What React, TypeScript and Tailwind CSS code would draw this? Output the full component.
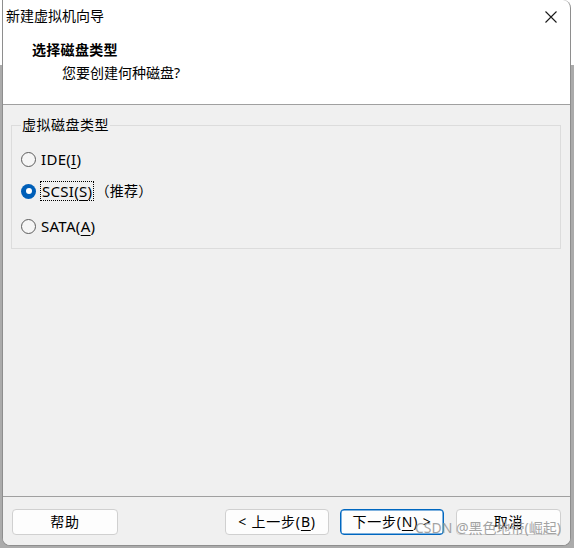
import type { ReactNode } from 'react';

const font = "font-['Noto_Sans','Noto_Sans_CJK_SC',sans-serif]";

function Key({ children }: { children: ReactNode }) {
  return <span className="underline underline-offset-[3px] decoration-1">{children}</span>;
}

function Radio({ checked, children }: { checked?: boolean; children: ReactNode }) {
  return (
    <div className="flex h-[20px] items-center">
      {checked ? (
        <span className="flex h-[15px] w-[15px] items-center justify-center rounded-full bg-[#005fb8]">
          <span className="h-[6px] w-[6px] rounded-full bg-white" />
        </span>
      ) : (
        <span className="h-[15px] w-[15px] rounded-full border border-[#5d5d5d] bg-[#f6f6f6]" />
      )}
      <div className="ml-[4px] flex items-center">{children}</div>
    </div>
  );
}

function Button({ primary, className, children }: { primary?: boolean; className: string; children: ReactNode }) {
  return (
    <button
      className={
        'flex h-[26px] items-center justify-center rounded-[4px] bg-[#fdfdfd] text-[14px] leading-[18px] tracking-[0.8px] text-black ' +
        (primary ? 'border border-[#0067c0] shadow-[inset_0_0_0_0.5px_#0067c0] ' : 'border border-[#d0d0d0] ') +
        className
      }
    >
      {children}
    </button>
  );
}

export default function App() {
  return (
    <div className={`${font} h-[548px] w-[574px] bg-[linear-gradient(to_bottom,#ffffff_65px,#ababab_65px)] pl-[2px] text-black`}>
      <div className="relative flex h-[546px] w-[569px] flex-col overflow-hidden rounded-tr-[8px] rounded-b-[8px] border-x border-b border-[#8e8e8e] bg-white">
        {/* title bar */}
        <div className="flex h-[32px] items-center justify-between pl-[3px] pr-[13px]">
          <span className="text-[14px] leading-[18px]">新建虚拟机向导</span>
          <svg width="12" height="12" viewBox="0 0 12 12" className="mt-[1px]">
            <path d="M0.5 0.5L11.5 11.5M11.5 0.5L0.5 11.5" stroke="#1a1a1a" strokeWidth="1.1" />
          </svg>
        </div>

        {/* header */}
        <div className="h-[73px] border-b border-[#a0a0a0] bg-white">
          <div className="mt-[9px] pl-[29px] text-[14px] font-bold leading-[18px] tracking-[0.3px]">选择磁盘类型</div>
          <div className="mt-[5px] pl-[59px] text-[14px] leading-[18px]">您要创建何种磁盘?</div>
        </div>

        {/* body */}
        <div className="flex-1 bg-[#f0f0f0] pl-[8px] pr-[9px]">
          <fieldset className="mt-[11px] border border-[#dcdcdc] px-[9px] pb-[12px]">
            <legend className="px-[1px] text-[14px] leading-[18px] tracking-[0.5px]">虚拟磁盘类型</legend>
            <div className="mt-[15px] flex flex-col text-[15px] leading-[18px] tracking-[0.3px]">
              <Radio>
                <span className="px-[1px]">
                  IDE(<Key>I</Key>)
                </span>
              </Radio>
              <div className="mt-[12px]">
                <Radio checked>
                  <span className="border border-dotted border-black px-[1px]">
                    SCSI(<Key>S</Key>)
                  </span>
                  <span className="ml-[1px] text-[14px]">（推荐）</span>
                </Radio>
              </div>
              <div className="mt-[15px]">
                <Radio>
                  <span className="px-[1px]">
                    SATA(<Key>A</Key>)
                  </span>
                </Radio>
              </div>
            </div>
          </fieldset>
        </div>

        {/* footer */}
        <div className="flex h-[49px] items-start border-t border-[#a0a0a0] bg-[#f0f0f0] pl-[9px] pr-[9px] pt-[12px]">
          <Button className="w-[106px]">帮助</Button>
          <div className="ml-auto flex gap-[11px]">
            <Button className="w-[104px]">
              &lt; 上一步(<Key>B</Key>)
            </Button>
            <Button primary className="w-[104px]">
              下一步(<Key>N</Key>) &gt;
            </Button>
            <Button className="ml-[1px] w-[105px]">取消</Button>
          </div>
        </div>

        {/* watermark */}
        <div className="pointer-events-none absolute bottom-[8px] right-[9px] text-[14px] leading-[18px] text-[#9a9a9a] opacity-90">
          CSDN @黑色地带(崛起)
        </div>
      </div>
    </div>
  );
}
